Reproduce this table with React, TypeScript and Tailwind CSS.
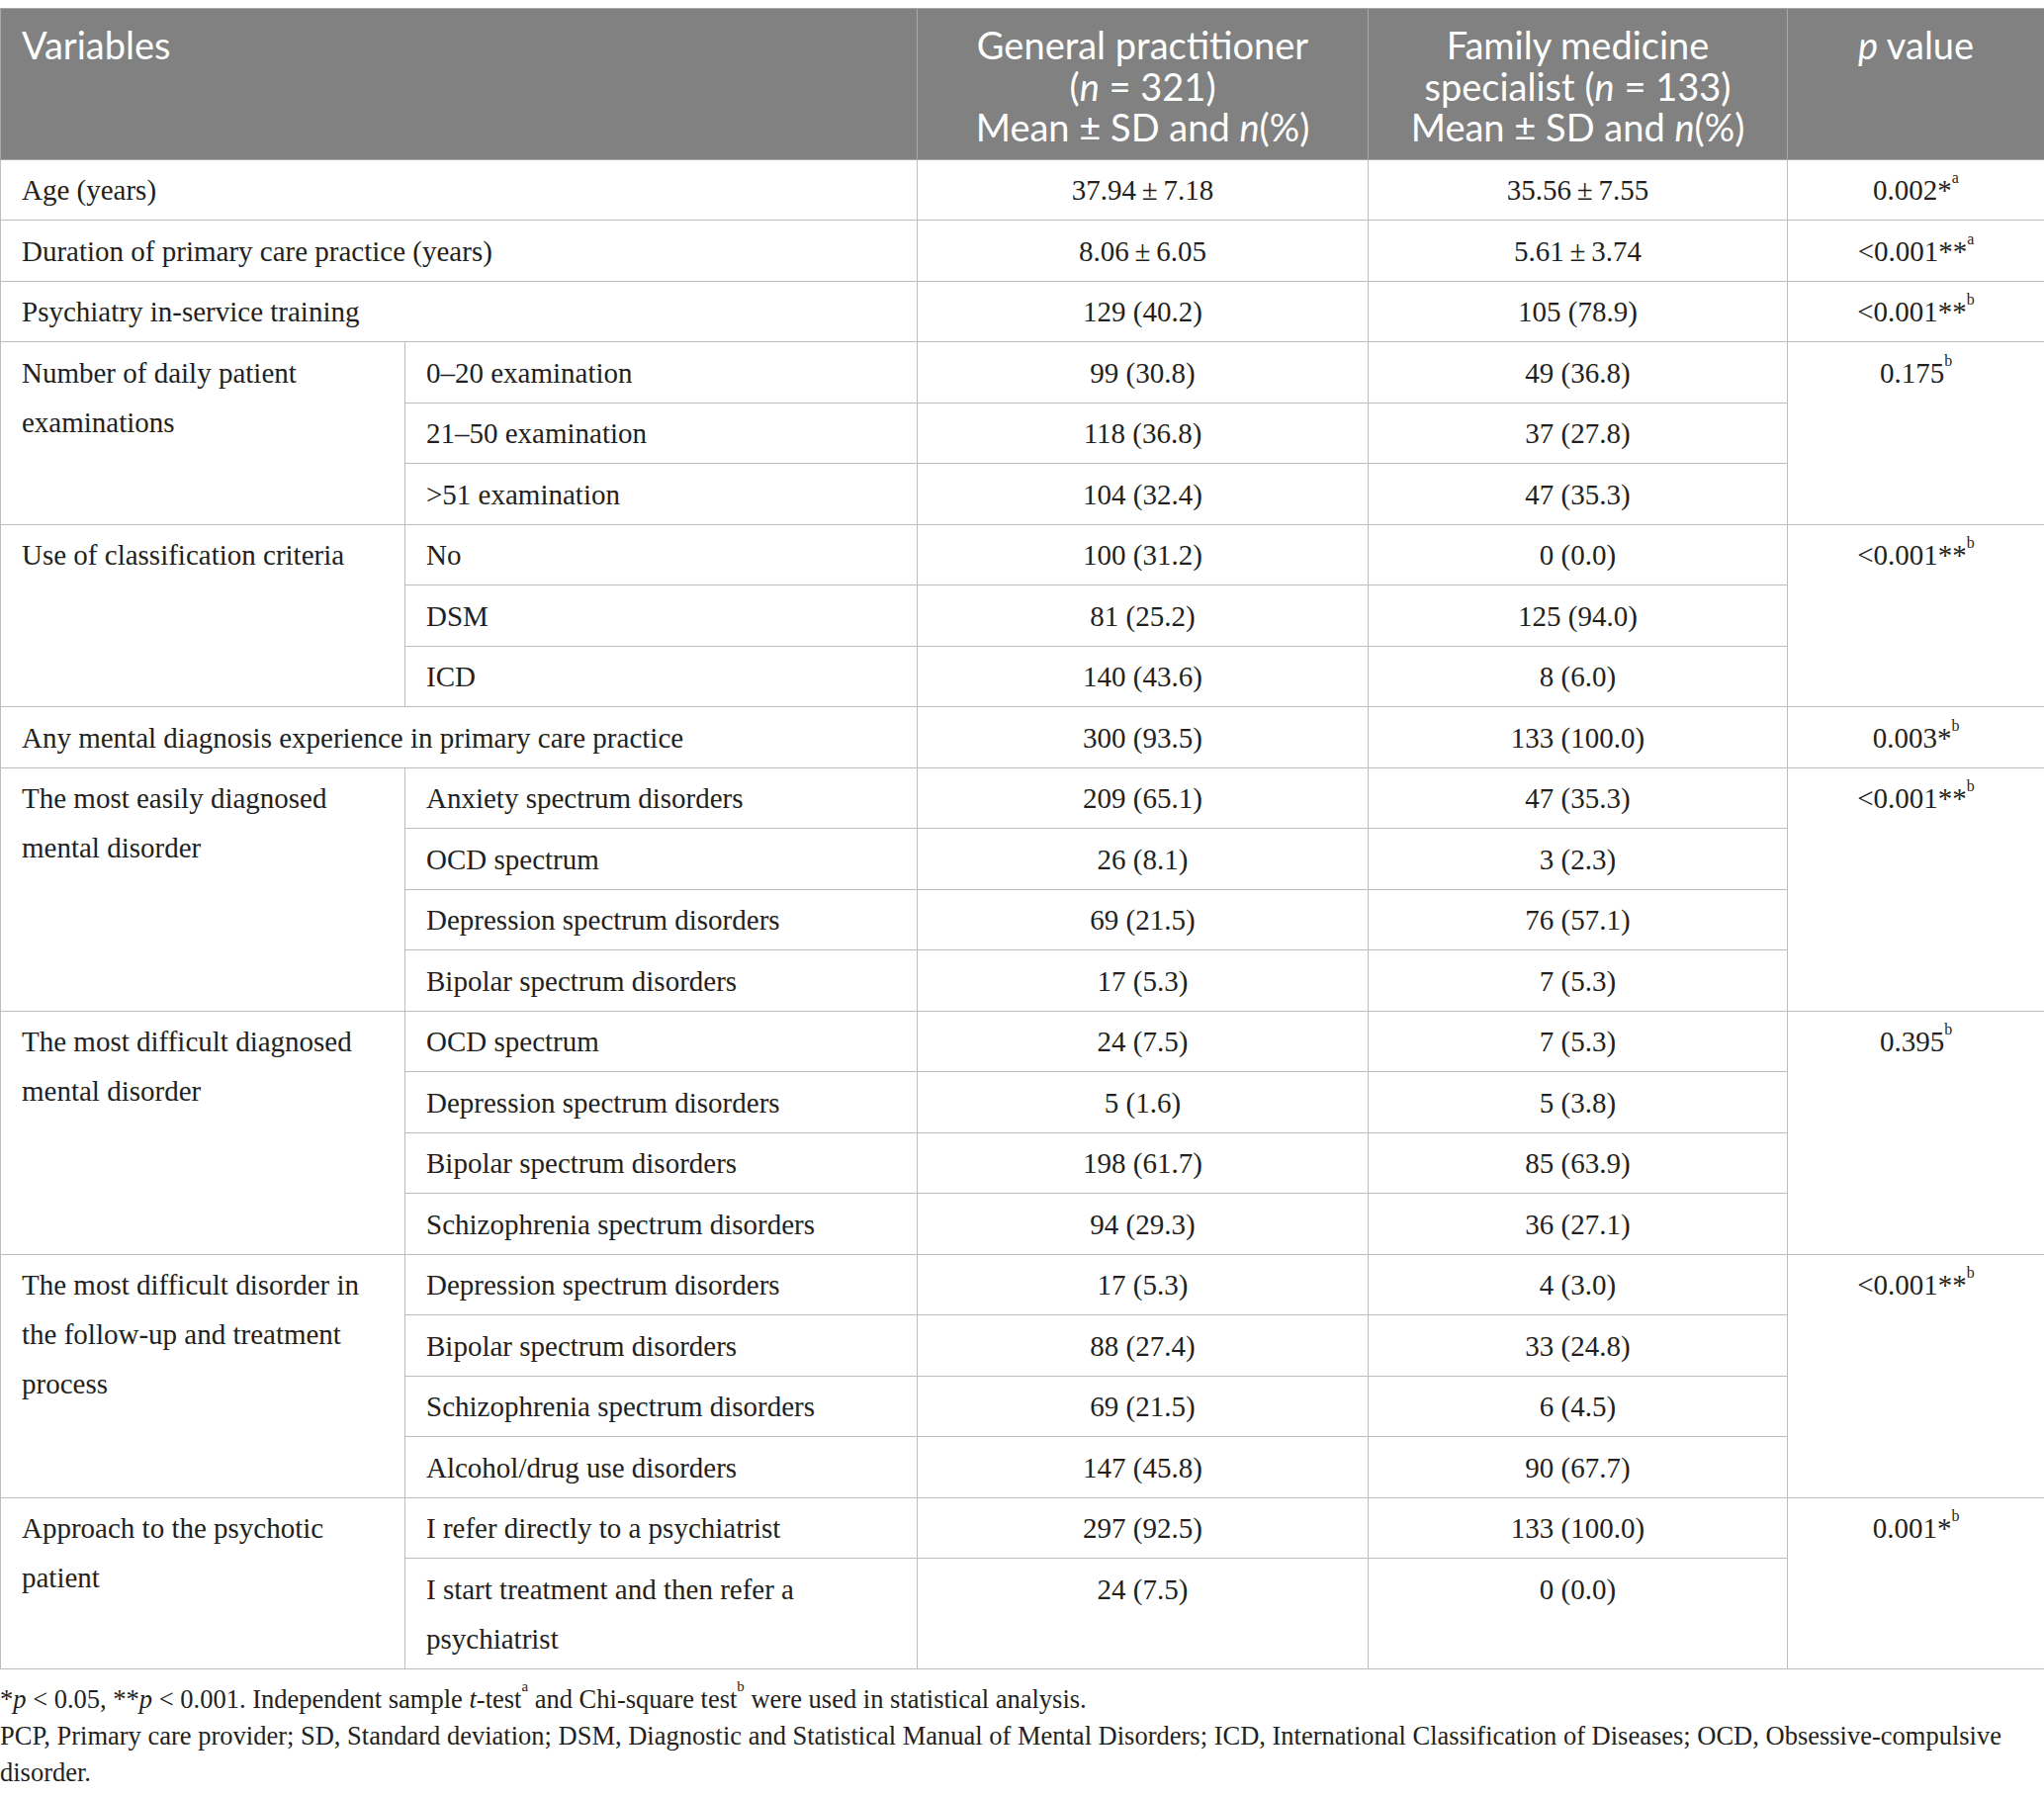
import React from "react";

type Sub = { label: string; gp: string; fm: string };
type Row =
  | { kind: "single"; label: string; gp: string; fm: string; p: string; sup: string }
  | { kind: "group"; label: string; p: string; sup: string; subs: Sub[] };

const rows: Row[] = [
  { kind: "single", label: "Age (years)", gp: "37.94\u2009±\u20097.18", fm: "35.56\u2009±\u20097.55", p: "0.002*", sup: "a" },
  { kind: "single", label: "Duration of primary care practice (years)", gp: "8.06\u2009±\u20096.05", fm: "5.61\u2009±\u20093.74", p: "<0.001**", sup: "a" },
  { kind: "single", label: "Psychiatry in-service training", gp: "129 (40.2)", fm: "105 (78.9)", p: "<0.001**", sup: "b" },
  {
    kind: "group",
    label: "Number of daily patient examinations",
    p: "0.175",
    sup: "b",
    subs: [
      { label: "0–20 examination", gp: "99 (30.8)", fm: "49 (36.8)" },
      { label: "21–50 examination", gp: "118 (36.8)", fm: "37 (27.8)" },
      { label: ">51 examination", gp: "104 (32.4)", fm: "47 (35.3)" },
    ],
  },
  {
    kind: "group",
    label: "Use of classification criteria",
    p: "<0.001**",
    sup: "b",
    subs: [
      { label: "No", gp: "100 (31.2)", fm: "0 (0.0)" },
      { label: "DSM", gp: "81 (25.2)", fm: "125 (94.0)" },
      { label: "ICD", gp: "140 (43.6)", fm: "8 (6.0)" },
    ],
  },
  { kind: "single", label: "Any mental diagnosis experience in primary care practice", gp: "300 (93.5)", fm: "133 (100.0)", p: "0.003*", sup: "b" },
  {
    kind: "group",
    label: "The most easily diagnosed mental disorder",
    p: "<0.001**",
    sup: "b",
    subs: [
      { label: "Anxiety spectrum disorders", gp: "209 (65.1)", fm: "47 (35.3)" },
      { label: "OCD spectrum", gp: "26 (8.1)", fm: "3 (2.3)" },
      { label: "Depression spectrum disorders", gp: "69 (21.5)", fm: "76 (57.1)" },
      { label: "Bipolar spectrum disorders", gp: "17 (5.3)", fm: "7 (5.3)" },
    ],
  },
  {
    kind: "group",
    label: "The most difficult diagnosed mental disorder",
    p: "0.395",
    sup: "b",
    subs: [
      { label: "OCD spectrum", gp: "24 (7.5)", fm: "7 (5.3)" },
      { label: "Depression spectrum disorders", gp: "5 (1.6)", fm: "5 (3.8)" },
      { label: "Bipolar spectrum disorders", gp: "198 (61.7)", fm: "85 (63.9)" },
      { label: "Schizophrenia spectrum disorders", gp: "94 (29.3)", fm: "36 (27.1)" },
    ],
  },
  {
    kind: "group",
    label: "The most difficult disorder in the follow-up and treatment process",
    p: "<0.001**",
    sup: "b",
    subs: [
      { label: "Depression spectrum disorders", gp: "17 (5.3)", fm: "4 (3.0)" },
      { label: "Bipolar spectrum disorders", gp: "88 (27.4)", fm: "33 (24.8)" },
      { label: "Schizophrenia spectrum disorders", gp: "69 (21.5)", fm: "6 (4.5)" },
      { label: "Alcohol/drug use disorders", gp: "147 (45.8)", fm: "90 (67.7)" },
    ],
  },
  {
    kind: "group",
    label: "Approach to the psychotic patient",
    p: "0.001*",
    sup: "b",
    subs: [
      { label: "I refer directly to a psychiatrist", gp: "297 (92.5)", fm: "133 (100.0)" },
      { label: "I start treatment and then refer a psychiatrist", gp: "24 (7.5)", fm: "0 (0.0)" },
    ],
  },
];

const cell = "border border-[#bdbdbd] align-top pt-[5.5px] pb-[5px] leading-[50px]";
const left = `${cell} text-left pl-[21px]`;
const mid = `${cell} text-center px-[12px]`;
const head = "border border-[#a8a8a8] align-top font-normal pt-[16px] pb-[11px]";

const P = ({ p, sup }: { p: string; sup: string }) => (
  <>
    {p}
    <sup className="text-[16px] align-[0.55em] leading-none">{sup}</sup>
  </>
);

export default function App() {
  return (
    <div
      className="w-[2067px] bg-white pt-[8px] text-[#231f20] text-[29px]"
      style={{ fontFamily: '"Liberation Serif", "Times New Roman", serif' }}
    >
      <table className="w-[2067px] table-fixed border-collapse border border-[#bdbdbd]">
        <colgroup>
          <col className="w-[409px]" />
          <col className="w-[518px]" />
          <col className="w-[456px]" />
          <col className="w-[424px]" />
          <col className="w-[260px]" />
        </colgroup>
        <thead>
          <tr
            className="bg-[#808180] text-white text-[38px] leading-[41.5px]"
            style={{ fontFamily: 'Lato, "Noto Sans", sans-serif' }}
          >
            <th colSpan={2} className={`${head} text-left px-[21px]`}>
              Variables
            </th>
            <th className={`${head} text-center px-[6px]`}>
              General practitioner
              <br />(<i>n</i> = 321)
              <br />Mean ± SD and <i>n</i>(%)
            </th>
            <th className={`${head} text-center px-[6px]`}>
              Family medicine
              <br />specialist (<i>n</i> = 133)
              <br />Mean ± SD and <i>n</i>(%)
            </th>
            <th className={`${head} text-center px-[6px]`}>
              <i>p</i> value
            </th>
          </tr>
        </thead>
        <tbody>
          {rows.map((r, i) =>
            r.kind === "single" ? (
              <tr key={i}>
                <td colSpan={2} className={`${left} pr-[12px]`}>{r.label}</td>
                <td className={mid}>{r.gp}</td>
                <td className={mid}>{r.fm}</td>
                <td className={mid}><P p={r.p} sup={r.sup} /></td>
              </tr>
            ) : (
              r.subs.map((s, j) => (
                <tr key={`${i}-${j}`}>
                  {j === 0 && (
                    <td rowSpan={r.subs.length} className={`${left} pr-[40px]`}>{r.label}</td>
                  )}
                  <td className={`${left} pl-[19px] pr-[40px]`}>{s.label}</td>
                  <td className={mid}>{s.gp}</td>
                  <td className={mid}>{s.fm}</td>
                  {j === 0 && (
                    <td rowSpan={r.subs.length} className={mid}><P p={r.p} sup={r.sup} /></td>
                  )}
                </tr>
              ))
            )
          )}
        </tbody>
      </table>
      <div className="pt-[12px] text-[26.5px] leading-[37px]">
        <p>
          *<i>p</i> &lt; 0.05, **<i>p</i> &lt; 0.001. Independent sample <i>t</i>-test
          <sup className="text-[15px] align-[0.6em] leading-none">a</sup> and Chi-square test
          <sup className="text-[15px] align-[0.6em] leading-none">b</sup> were used in statistical analysis.
        </p>
        <p>
          PCP, Primary care provider; SD, Standard deviation; DSM, Diagnostic and Statistical Manual of Mental Disorders; ICD, International Classification of Diseases; OCD, Obsessive-compulsive disorder.
        </p>
      </div>
    </div>
  );
}
